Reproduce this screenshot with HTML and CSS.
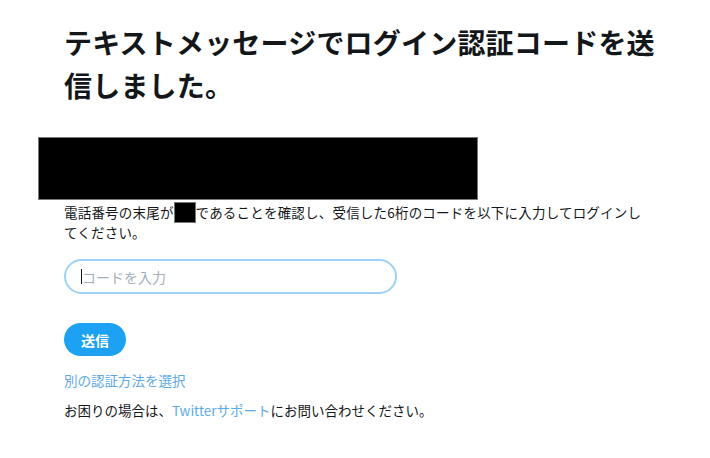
FILE: index.html
```html
<!DOCTYPE html>
<html lang="ja">
<head>
<meta charset="utf-8">
<link rel="stylesheet" href="styles.css">
</head>
<body>
<main class="page">
  <h1 class="title">テキストメッセージでログイン認証コードを送信しました。</h1>
  <div class="redact-block"></div>
  <p class="desc">電話番号の末尾が<span class="redact-inline"></span>であることを確認し、受信した6桁のコードを以下に入力してログインしてください。</p>
  <div class="field"><span class="caret"></span><input class="code-input" type="text" placeholder="コードを入力"></div>
  <button class="submit">送信</button>
  <a class="alt-link" href="#">別の認証方法を選択</a>
  <p class="help">お困りの場合は、<a class="inline-link" href="#">Twitterサポート</a>にお問い合わせください。</p>
</main>
</body>
</html>
```
FILE: styles.css
```css
* { box-sizing: border-box; }
html, body { margin: 0; padding: 0; background: #fff; }
body {
  font-family: "Noto Sans CJK JP", "Noto Sans", sans-serif;
  color: #14171a;
}
.page {
  padding: 21px 50px 0 64px;
  display: flex;
  flex-direction: column;
  align-items: flex-start;
}
.title {
  margin: 0;
  font-size: 28px;
  font-weight: 700;
  line-height: 43px;
  width: 600px;
  letter-spacing: 0.2px;
}
.redact-block {
  margin: 30px 0 0 -26px;
  width: 440px;
  height: 63px;
  background: #000;
  border: 1px solid #777;
}
.desc {
  margin: 2px 0 0;
  font-size: 13.5px;
  line-height: 19px;
  width: 590px;
  letter-spacing: 0.2px;
  color: #14171a;
}
.redact-inline {
  display: inline-block;
  width: 22px;
  height: 21px;
  background: #000;
  border: 1px solid #777;
  vertical-align: -5px;
}
.field {
  margin-top: 17px;
  width: 333px;
  height: 35px;
  border: 2px solid #9fd1f5;
  border-radius: 18px;
  display: flex;
  align-items: center;
  padding-left: 15px;
}
.caret {
  width: 1px;
  height: 15px;
  background: #14171a;
}
.code-input {
  border: 0;
  outline: 0;
  font: inherit;
  font-size: 14px;
  padding: 0;
  width: 280px;
  background: transparent;
  color: #14171a;
}
.code-input::placeholder { color: #a3aeb7; }
.submit {
  margin-top: 29px;
  width: 62px;
  height: 33px;
  border: 0;
  border-radius: 17px;
  background: #1da1f2;
  color: #fff;
  font: inherit;
  font-size: 14px;
  font-weight: 700;
  padding: 0;
}
.alt-link {
  margin-top: 15px;
  font-size: 13.5px;
  line-height: 19px;
  color: #5ea9e6;
  text-decoration: none;
}
.help {
  margin: 11px 0 0;
  font-size: 13.5px;
  line-height: 19px;
}
.inline-link { color: #5ea9e6; text-decoration: none; }
```
